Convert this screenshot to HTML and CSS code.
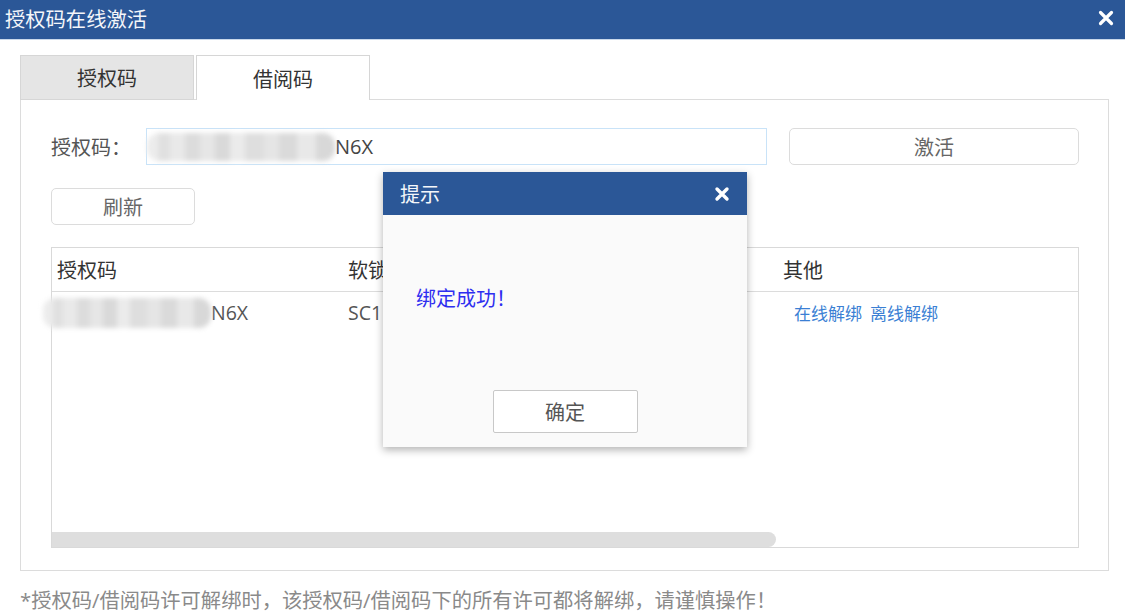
FILE: index.html
```html
<!DOCTYPE html>
<html lang="zh">

<head>
    <meta charset="UTF-8">
    <meta name="viewport" content="width=device-width, initial-scale=1.0">
    <title>授权码在线激活</title>
    <link rel="stylesheet" href="styles.css">
</head>

<body>
    <div class="window">
        <div class="titlebar">
            <span class="titlebar-text">授权码在线激活</span>
            <button class="close-btn" aria-label="关闭">
                <svg viewBox="0 0 16 16" width="16" height="16">
                    <path d="M2.5 2.5L13.5 13.5M13.5 2.5L2.5 13.5" stroke="#fff" stroke-width="3.2" stroke-linecap="round"></path>
                </svg>
            </button>
        </div>

        <div class="content">
            <div class="tabs">
                <div class="tab tab-active">授权码</div>
                <div class="tab">借阅码</div>
            </div>

            <div class="panel">
                <div class="form-row">
                    <label class="label">授权码：</label>
                    <div class="input">
                        <span class="mask mask-input"></span>
                        <span class="input-text">N6X</span>
                    </div>
                    <button class="btn btn-activate">激活</button>
                </div>
                <div class="form-row">
                    <button class="btn btn-refresh">刷新</button>
                </div>

                <div class="grid">
                    <div class="grid-head">
                        <div class="col col-code">授权码</div>
                        <div class="col col-lock">软锁</div>
                        <div class="col col-mid"></div>
                        <div class="col col-other">其他</div>
                    </div>
                    <div class="grid-body">
                        <div class="grid-row">
                            <div class="col col-code">
                                <span class="mask mask-cell"></span>
                                <span>N6X</span>
                            </div>
                            <div class="col col-lock">SC1</div>
                            <div class="col col-mid"></div>
                            <div class="col col-other">
                                <a class="link" href="#">在线解绑</a>
                                <a class="link" href="#">离线解绑</a>
                            </div>
                        </div>
                    </div>
                    <div class="scroll-track">
                        <div class="scroll-thumb"></div>
                    </div>
                </div>
            </div>

            <p class="note">*授权码/借阅码许可解绑时，该授权码/借阅码下的所有许可都将解绑，请谨慎操作！</p>
        </div>

        <!-- 提示弹窗 -->
        <div class="dialog">
            <div class="dialog-header">
                <span>提示</span>
                <svg viewBox="0 0 16 16" width="16" height="16">
                    <path d="M3 3L13 13M13 3L3 13" stroke="#fff" stroke-width="3.4" stroke-linecap="round"></path>
                </svg>
            </div>
            <div class="dialog-body">
                <p class="dialog-msg">绑定成功！</p>
                <button class="btn btn-ok">确定</button>
            </div>
        </div>
    </div>
</body>

</html>
```

FILE: styles.css
```css
* {
    box-sizing: border-box;
    margin: 0;
    padding: 0;
}

body {
    font-family: "Open Sans", "Noto Sans CJK SC", sans-serif;
    background-color: #fff;
    color: #444;
}

.window {
    position: relative;
    width: 1125px;
    height: 616px;
    overflow: hidden;
}

.titlebar {
    display: flex;
    align-items: center;
    justify-content: space-between;
    height: 40px;
    padding: 0 11px 3px 5px;
    background-color: #2b5797;
    border-bottom: 1px solid #c9d8ea;
}

.titlebar-text {
    font-size: 20.3px;
    color: #f4f6fa;
}

.close-btn {
    display: flex;
    background: none;
    border: none;
    cursor: pointer;
}

.content {
    padding: 15px 16px 0 20px;
}

.tabs {
    display: flex;
    gap: 2px;
}

.tab {
    width: 174px;
    height: 45px;
    display: flex;
    align-items: center;
    justify-content: center;
    font-size: 20px;
    color: #333;
    background-color: #fff;
    border: 1px solid #d6d6d6;
    border-bottom: none;
    margin-bottom: -1px;
    position: relative;
}

.tab-active {
    background-color: #e5e5e5;
    border-bottom: 1px solid #d6d6d6;
}

.panel {
    border: 1px solid #dcdcdc;
    padding: 28px 29px 22px 30px;
}

.form-row {
    display: flex;
    align-items: center;
    margin-bottom: 23px;
}

.label {
    width: 95px;
    font-size: 20px;
    color: #555;
}

.input {
    display: flex;
    align-items: center;
    width: 621px;
    height: 37px;
    border: 1px solid #c9e3f8;
    font-size: 20px;
    color: #444;
}

.mask {
    display: inline-block;
    border-radius: 12px;
    filter: blur(2.6px);
    background:
        linear-gradient(90deg,
            #ececec 0 6%, #e0e0e0 6% 12%, #e9e9e9 12% 20%, #dcdcdc 20% 28%,
            #e6e6e6 28% 36%, #d9d9d9 36% 44%, #ebebeb 44% 52%, #dedede 52% 62%,
            #e5e5e5 62% 70%, #dadada 70% 80%, #e8e8e8 80% 90%, #d8d8d8 90% 100%);
}

.mask-input {
    width: 188px;
    height: 28px;
}

.btn {
    background-color: #fff;
    border: 1px solid #dcdcdc;
    border-radius: 5px;
    font-family: inherit;
    font-size: 20px;
    color: #666;
    cursor: pointer;
}

.btn-activate {
    width: 290px;
    height: 37px;
    margin-left: 22px;
}

.btn-refresh {
    width: 144px;
    height: 37px;
}

.form-row + .form-row {
    margin-bottom: 22px;
}

.grid {
    display: flex;
    flex-direction: column;
    width: 1028px;
    height: 301px;
    border: 1px solid #d9d9d9;
}

.grid-head,
.grid-row {
    display: flex;
    align-items: center;
}

.grid-head {
    height: 44px;
    border-bottom: 1px solid #dcdcdc;
    font-size: 20px;
    color: #333;
}

.grid-body {
    flex: 1;
}

.grid-row {
    height: 41px;
    font-size: 19.5px;
    color: #555;
}

.col {
    padding-left: 5px;
    white-space: nowrap;
}

.col-code {
    width: 291px;
    display: flex;
    align-items: center;
}

.col-lock {
    width: 150px;
}

.col-mid {
    width: 285px;
}

.col-other {
    flex: 1;
}

.mask-cell {
    width: 168px;
    height: 30px;
    margin-left: -14px;
}

.grid-row .col-other {
    padding-left: 16px;
}

.link {
    color: #3b7fd4;
    font-size: 17px;
    text-decoration: none;
    margin-right: 3px;
}

.scroll-track {
    height: 15px;
}

.scroll-thumb {
    width: 724px;
    height: 15px;
    background-color: #dedede;
    border-radius: 0 8px 8px 0;
}

.note {
    margin-top: 17px;
    font-size: 20.3px;
    line-height: 24px;
    color: #8a8a8a;
}

/* 提示弹窗 */
.dialog {
    position: absolute;
    left: 383px;
    top: 172px;
    width: 364px;
    height: 275px;
    display: flex;
    flex-direction: column;
    background-color: #fafafa;
    box-shadow: 0 3px 8px rgba(0, 0, 0, 0.3);
}

.dialog-header {
    display: flex;
    align-items: center;
    justify-content: space-between;
    height: 43px;
    padding: 0 17px 0 17px;
    background-color: #2b5797;
    font-size: 20px;
    color: #f4f6fa;
}

.dialog-body {
    flex: 1;
    display: flex;
    flex-direction: column;
    align-items: center;
    padding: 0 33px;
}

.dialog-msg {
    align-self: flex-start;
    margin-top: 68px;
    font-size: 20px;
    color: #2e2ef0;
}

.btn-ok {
    width: 145px;
    height: 43px;
    margin-top: auto;
    margin-bottom: 14px;
    border-radius: 2px;
    border-color: #c8c8c8;
    color: #555;
}
```
